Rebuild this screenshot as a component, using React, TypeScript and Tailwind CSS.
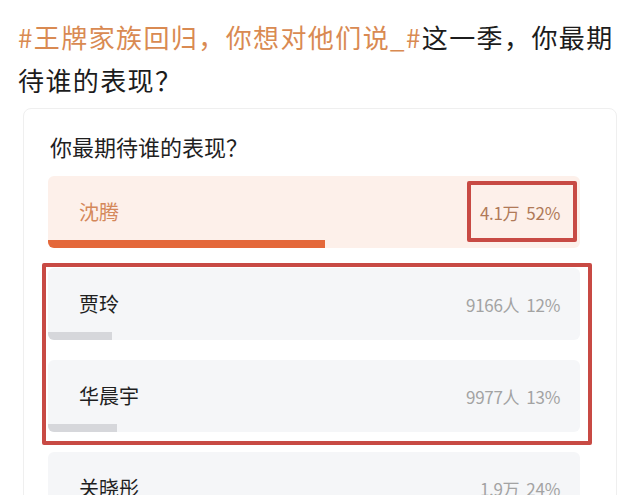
import React from "react";

type Option = {
  name: string;
  count: string;
  pct: number;
  top?: boolean;
};

const OPTIONS: Option[] = [
  { name: "沈腾", count: "4.1万", pct: 52, top: true },
  { name: "贾玲", count: "9166人", pct: 12 },
  { name: "华晨宇", count: "9977人", pct: 13 },
  { name: "关晓彤", count: "1.9万", pct: 24 },
];

const FONT = { fontFamily: '"Noto Sans CJK SC", "Noto Sans", sans-serif' };

function PollRow({ option }: { option: Option }) {
  return (
    <div
      className={
        "relative h-[72px] rounded-md overflow-hidden flex items-center justify-between pl-[31px] pr-[20px] " +
        (option.top ? "bg-[#fdf0ea]" : "bg-[#f5f6f8]")
      }
    >
      <span
        className={
          "text-[20px] leading-none " +
          (option.top ? "text-[#d4885a]" : "text-[#1f1f1f]")
        }
      >
        {option.name}
      </span>
      <span
        className={
          "text-[17px] leading-none tracking-[-0.3px] " +
          (option.top ? "text-[#b07a58]" : "text-[#a3a3a3]")
        }
      >
        {option.count}&nbsp;&nbsp;{option.pct}%
      </span>
      <div
        className={
          "absolute left-0 bottom-0 h-[8px] " +
          (option.top ? "bg-[#e4683a]" : "bg-[#d6d7db]")
        }
        style={{ width: `${option.pct}%` }}
      />
      {option.top && (
        <div className="absolute right-[3px] top-[5px] w-[110px] h-[61px] border-[4px] border-[#c84a44] rounded-[2px]" />
      )}
    </div>
  );
}

export default function App() {
  return (
    <div className="w-[640px] h-[495px] bg-white overflow-hidden" style={FONT}>
      <div className="pt-[15px] pl-[18px] w-[622px] text-[26px] leading-[43px] tracking-[1.4px] text-[#1c1c1c]">
        <span className="text-[#d98a52]">#王牌家族回归，你想对他们说_#</span>
        这一季，你最期待谁的表现？
      </div>
      <div className="mt-[7px] ml-[23px] w-[594px] border border-[#efefef] rounded-lg pl-[24px] pr-[36px] pt-[22px]">
        <div className="text-[22px] leading-[30px] text-[#1f1f1f] pl-[2px]">
          你最期待谁的表现？
        </div>
        <div className="mt-[15px] flex flex-col gap-[20px]">
          <PollRow option={OPTIONS[0]} />
          <div className="relative flex flex-col gap-[20px]">
            <PollRow option={OPTIONS[1]} />
            <PollRow option={OPTIONS[2]} />
            <div className="absolute -left-[6px] -right-[12px] -top-[5px] -bottom-[13px] border-[4px] border-[#c84a44] rounded-[2px]" />
          </div>
          <PollRow option={OPTIONS[3]} />
        </div>
      </div>
    </div>
  );
}
